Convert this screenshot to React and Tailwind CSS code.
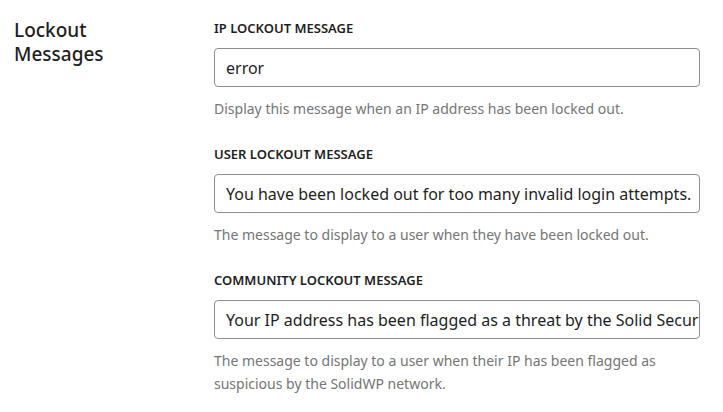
import React from "react";

const font = { fontFamily: '"Noto Sans", "Open Sans", sans-serif' };

function Field({ label, value, help }) {
  return (
    <div className="flex flex-col">
      <div className="text-[13px] leading-[20px] font-semibold text-[#1e1e1e] uppercase">{label}</div>
      <div className="mt-[10px] h-[39px] w-[486px] rounded-[4px] border border-[#8c8f94] bg-white pl-[11px] pr-[2px] flex items-center overflow-hidden">
        <span className="whitespace-nowrap text-[16px] text-[#1e1e1e]">{value}</span>
      </div>
      <div className="mt-[10px] text-[14px] leading-[23px] text-[#757575]">{help}</div>
    </div>
  );
}

export default function App() {
  return (
    <div className="w-[723px] h-[412px] bg-white flex" style={font}>
      <div className="w-[214px] pl-[14px] pt-[18px]">
        <h2 className="text-[19px] leading-[24px] font-medium text-[#1e1e1e]">
          Lockout
          <br />
          Messages
        </h2>
      </div>
      <div className="w-[486px] pt-[18px] flex flex-col gap-[24px]">
        <Field label="IP Lockout Message" value="error" help="Display this message when an IP address has been locked out." />
        <Field
          label="User Lockout Message"
          value="You have been locked out for too many invalid login attempts."
          help="The message to display to a user when they have been locked out."
        />
        <Field
          label="Community Lockout Message"
          value="Your IP address has been flagged as a threat by the Solid Security network."
          help="The message to display to a user when their IP has been flagged as suspicious by the SolidWP network."
        />
      </div>
    </div>
  );
}
